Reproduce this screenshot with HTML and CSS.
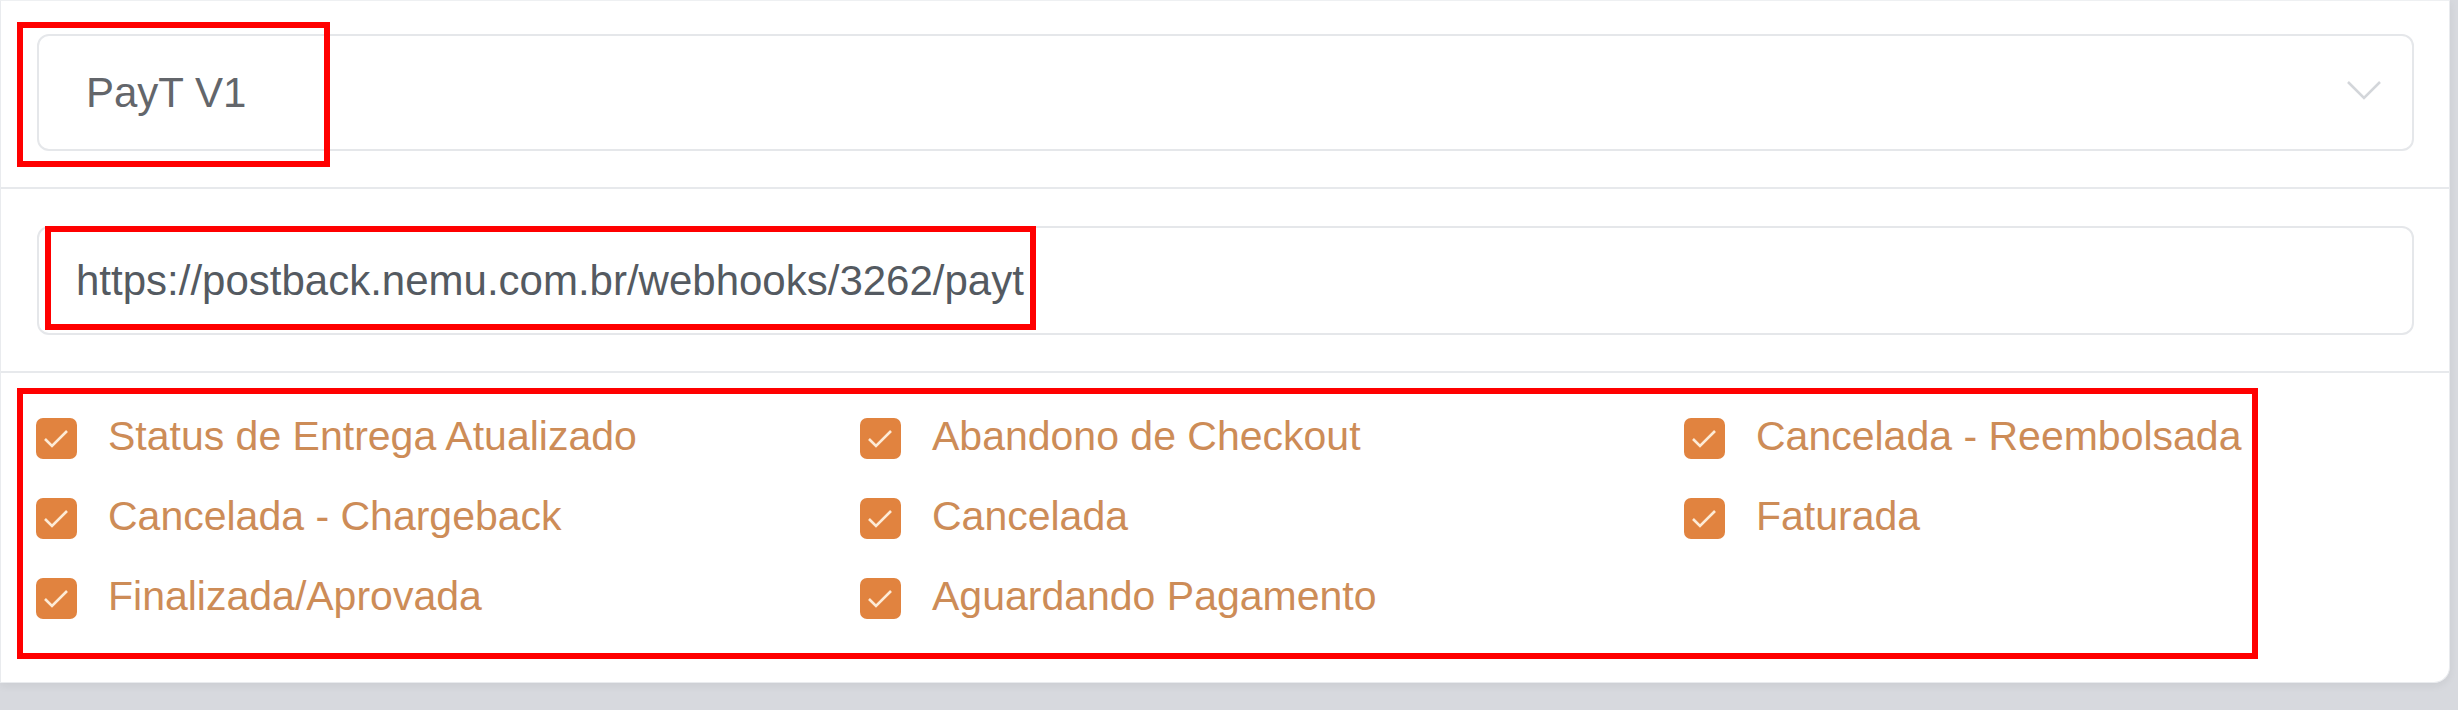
FILE: index.html
```html
<!DOCTYPE html>
<html lang="pt-BR">
<head>
<meta charset="utf-8">
<title>Webhook PayT</title>
<link rel="stylesheet" href="styles.css">
</head>
<body>
<div class="card">
  <div class="section section-select">
    <div class="select">
      <span class="select-value">PayT V1</span>
      <svg class="chevron" width="36" height="21" viewBox="0 0 36 21"><polyline points="2,2 18,18 34,2" fill="none" stroke="#d3d6da" stroke-width="2.5"/></svg>
    </div>
  </div>
  <div class="section section-url">
    <div class="input">https://postback.nemu.com.br/webhooks/3262/payt</div>
  </div>
  <div class="checks">
    <label class="check"><span class="box"><svg width="41" height="41" viewBox="0 0 41 41"><polyline points="9,21 16,28 31,13" fill="none" stroke="#fdebd6" stroke-width="2.6"/></svg></span><span class="text">Status de Entrega Atualizado</span></label>
    <label class="check"><span class="box"><svg width="41" height="41" viewBox="0 0 41 41"><polyline points="9,21 16,28 31,13" fill="none" stroke="#fdebd6" stroke-width="2.6"/></svg></span><span class="text">Abandono de Checkout</span></label>
    <label class="check"><span class="box"><svg width="41" height="41" viewBox="0 0 41 41"><polyline points="9,21 16,28 31,13" fill="none" stroke="#fdebd6" stroke-width="2.6"/></svg></span><span class="text">Cancelada - Reembolsada</span></label>
    <label class="check"><span class="box"><svg width="41" height="41" viewBox="0 0 41 41"><polyline points="9,21 16,28 31,13" fill="none" stroke="#fdebd6" stroke-width="2.6"/></svg></span><span class="text">Cancelada - Chargeback</span></label>
    <label class="check"><span class="box"><svg width="41" height="41" viewBox="0 0 41 41"><polyline points="9,21 16,28 31,13" fill="none" stroke="#fdebd6" stroke-width="2.6"/></svg></span><span class="text">Cancelada</span></label>
    <label class="check"><span class="box"><svg width="41" height="41" viewBox="0 0 41 41"><polyline points="9,21 16,28 31,13" fill="none" stroke="#fdebd6" stroke-width="2.6"/></svg></span><span class="text">Faturada</span></label>
    <label class="check"><span class="box"><svg width="41" height="41" viewBox="0 0 41 41"><polyline points="9,21 16,28 31,13" fill="none" stroke="#fdebd6" stroke-width="2.6"/></svg></span><span class="text">Finalizada/Aprovada</span></label>
    <label class="check"><span class="box"><svg width="41" height="41" viewBox="0 0 41 41"><polyline points="9,21 16,28 31,13" fill="none" stroke="#fdebd6" stroke-width="2.6"/></svg></span><span class="text">Aguardando Pagamento</span></label>
  </div>
  <div class="mark mark-select"></div>
  <div class="mark mark-url"></div>
  <div class="mark mark-checks"></div>
</div>
</body>
</html>
```

FILE: styles.css
```css
html, body {
  margin: 0;
  padding: 0;
}
body {
  background: #d7d9de;
  width: 2458px;
  height: 710px;
  overflow: hidden;
  font-family: "Liberation Sans", Arial, sans-serif;
}
.card {
  position: relative;
  width: 2450px;
  height: 683px;
  background: #fff;
  border: 1px solid #e9ebee;
  border-top-color: #eef0f2;
  border-radius: 0 0 16px 0;
  box-shadow: 0 3px 8px rgba(0, 0, 0, 0.06);
  box-sizing: border-box;
  margin-top: 0;
}
.section {
  border-bottom: 2px solid #e7e9ec;
  padding: 0 35px 0 36px;
}
.section-select {
  padding-top: 33px;
  padding-bottom: 36px;
}
.section-url {
  padding-top: 37px;
  padding-bottom: 36px;
}
.select {
  height: 117px;
  box-sizing: border-box;
  border: 2px solid #e5e7ea;
  border-radius: 12px;
  display: flex;
  align-items: center;
  justify-content: space-between;
  padding: 0 30px 0 47px;
}
.select-value {
  font-size: 42px;
  color: #63666b;
}
.chevron {
  display: block;
  margin-top: -4px;
}
.input {
  height: 109px;
  box-sizing: border-box;
  border: 2px solid #e5e7ea;
  border-radius: 12px;
  display: flex;
  align-items: center;
  padding: 0 0 0 37px;
  font-size: 42px;
  color: #545a61;
}
.checks {
  display: grid;
  grid-template-columns: 824px 824px 824px;
  grid-auto-rows: 80px;
  padding: 25px 0 0 35px;
}
.check {
  display: flex;
  align-items: center;
  gap: 31px;
}
.box {
  width: 41px;
  height: 41px;
  border-radius: 7px;
  background: #e1833f;
  display: block;
  flex: none;
}
.box svg {
  display: block;
}
.text {
  font-size: 41px;
  color: #cd8c57;
  margin-top: -4px;
}
.mark {
  position: absolute;
  border: 6px solid #ff0000;
  box-sizing: border-box;
}
.mark-select {
  left: 16px;
  top: 21px;
  width: 313px;
  height: 145px;
}
.mark-url {
  left: 44px;
  top: 225px;
  width: 991px;
  height: 104px;
}
.mark-checks {
  left: 16px;
  top: 387px;
  width: 2241px;
  height: 271px;
}
```
